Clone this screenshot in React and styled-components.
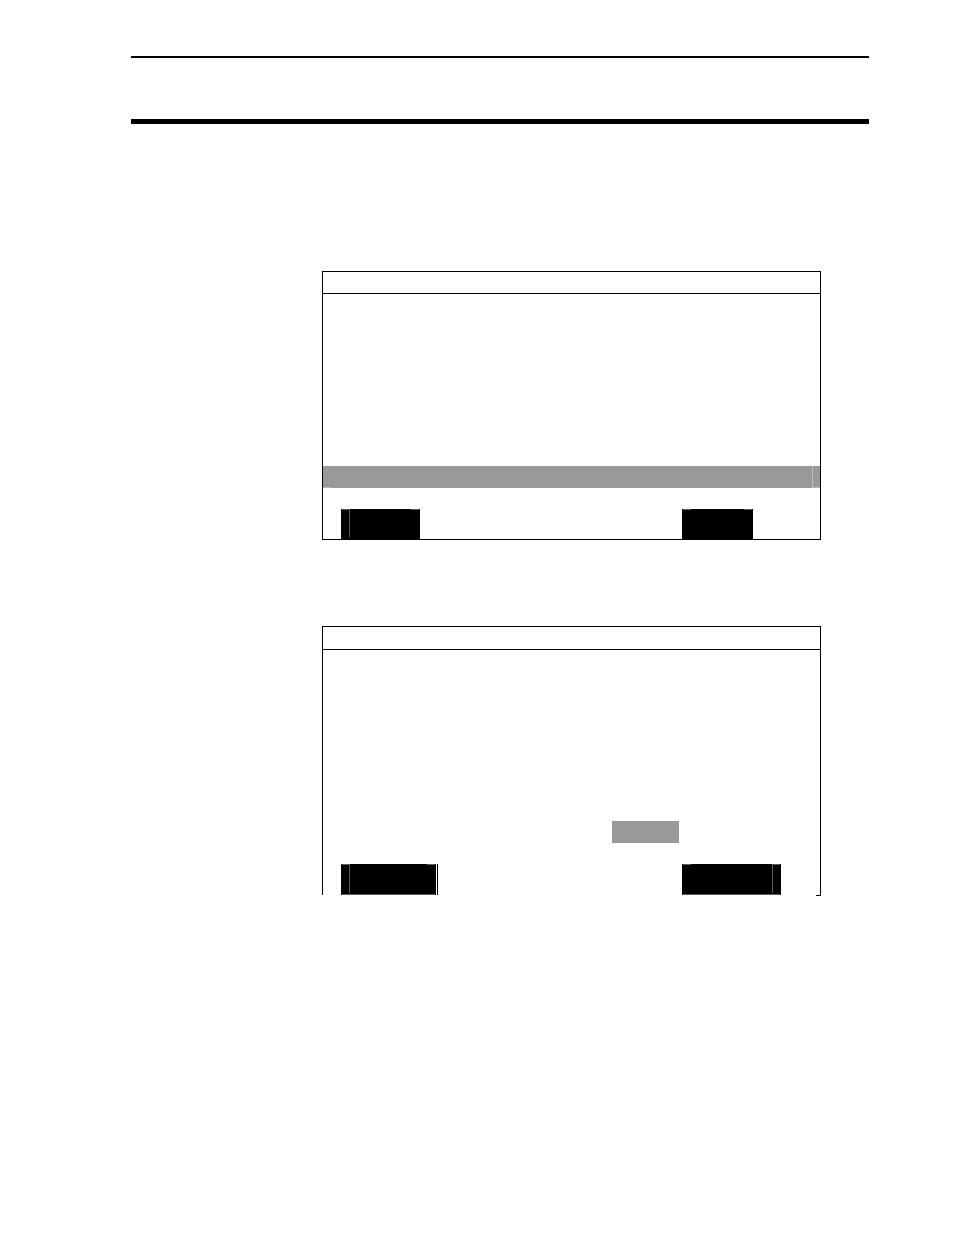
import React from "react";
import styled, { createGlobalStyle, css } from "styled-components";

const GlobalStyle = createGlobalStyle`
  *, *::before, *::after { box-sizing: border-box; }
  body {
    margin: 0;
    background: #fff;
    color: #000;
    font-family: "Liberation Sans", Arial, sans-serif;
  }
`;

const Page = styled.div`
  min-height: 100vh;
  padding: 56px 85px 80px 131px;
`;

const PageHeader = styled.header`
  height: 68px;
  border-top: 2px solid #000;
  border-bottom: 5px solid #000;
`;

const Screens = styled.main`
  display: flex;
  flex-direction: column;
  gap: 86px;
  padding: 147px 48px 0 191px;
`;

const Screen = styled.section`
  position: relative;
  border: 1px solid #000;
  ${({ $open }) =>
    $open &&
    css`
      border-bottom: 0;

      /* short foot that closes the right-hand corner */
      &::after {
        content: "";
        position: absolute;
        right: -1px;
        bottom: -1px;
        width: 5px;
        height: 1px;
        background: #000;
      }
    `}
`;

const TitleBar = styled.div`
  height: ${({ $tall }) => ($tall ? 23 : 22)}px;
  border-bottom: 1px solid #000;
`;

const ScreenBody = styled.div`
  height: ${({ $short }) => ($short ? 171 : 172)}px;
`;

const SelectedRow = styled.div`
  height: 22px;
  background:
    linear-gradient(#bbb, #bbb) right 7px top 0 / 1px 100% no-repeat,
    linear-gradient(#bbb, #bbb) left bottom / 8px 1px no-repeat,
    linear-gradient(#bbb, #bbb) right bottom / 8px 1px no-repeat,
    #999;
`;

const FieldRow = styled.div`
  display: flex;
  justify-content: flex-end;
  padding-right: 141px;
`;

const SelectedField = styled.div`
  width: 67px;
  height: 22px;
  background: #999;
`;

const SoftKeys = styled.div`
  display: grid;
  grid-template-columns: 341fr 138fr;
  padding: 21px 0 0 18px;
`;

const KeySlot = styled.div`
  display: flex;
  gap: 1px;
`;

const edge = "linear-gradient(#5c5c5c, #5c5c5c)";
const seams = {
  left: `${edge} left 8px top 0 / 1px calc(100% - 2px) no-repeat,`,
  right: `${edge} right 8px top 0 / 1px calc(100% - 2px) no-repeat,`,
};

const SoftKey = styled.button`
  width: ${({ $width }) => $width}px;
  height: ${({ $underlined }) => ($underlined ? 31 : 30)}px;
  padding: 0;
  border: 0;
  border-radius: 0;
  background:
    ${({ $seam }) => seams[$seam] || ""}
    ${({ $underlined }) =>
      $underlined ? `${edge} center bottom / calc(100% - 2px) 1px no-repeat,` : ""}
    ${edge} left 1px top 0 / 8px 1px no-repeat,
    ${edge} right 1px top 0 / 8px 1px no-repeat,
    #000;
`;

const KeyEdge = styled.span`
  width: 1px;
  background: #000;
`;

export default function App() {
  return (
    <>
      <GlobalStyle />
      <Page>
        <PageHeader />
        <Screens>
          <Screen>
            <TitleBar />
            <ScreenBody />
            <SelectedRow />
            <SoftKeys>
              <KeySlot>
                <SoftKey type="button" aria-label="Left key" $width={79} $seam="left" />
              </KeySlot>
              <KeySlot>
                <SoftKey type="button" aria-label="Right key" $width={71} />
              </KeySlot>
            </SoftKeys>
          </Screen>
          <Screen $open>
            <TitleBar $tall />
            <ScreenBody $short />
            <FieldRow>
              <SelectedField />
            </FieldRow>
            <SoftKeys>
              <KeySlot>
                <SoftKey type="button" aria-label="Left key" $width={95} $seam="left" $underlined />
                <KeyEdge />
              </KeySlot>
              <KeySlot>
                <SoftKey type="button" aria-label="Right key" $width={99} $seam="right" $underlined />
              </KeySlot>
            </SoftKeys>
          </Screen>
        </Screens>
      </Page>
    </>
  );
}
